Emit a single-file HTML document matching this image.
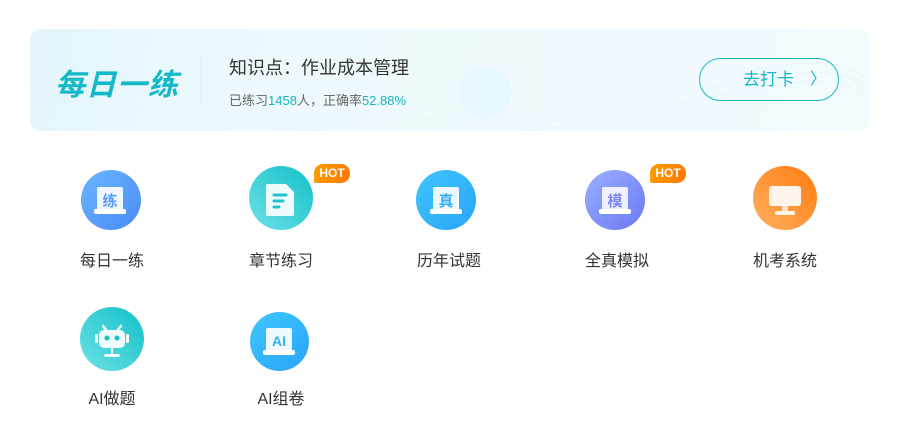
<!DOCTYPE html>
<html><head><meta charset="utf-8"><style>
*{margin:0;padding:0;box-sizing:border-box}
body{width:898px;height:436px;background:#fff;font-family:"Liberation Sans","Noto Sans CJK SC",sans-serif;position:relative;overflow:hidden}
.banner{position:absolute;left:30px;top:29px;width:839px;height:102px;border-radius:10px;background:linear-gradient(100deg,#e3f6fb 0%,#eef9fd 30%,#f2fbfe 100%);overflow:hidden}
.logo{position:absolute;left:55px;top:60px;font-size:30px;font-weight:bold;font-style:italic;color:#13b9c8;letter-spacing:1px}
.div{position:absolute;left:201px;top:55px;width:1px;height:50px;background:#d9eef3}
.t1{position:absolute;left:229px;top:54px;font-size:18px;color:#333}
.t2{position:absolute;left:229px;top:90px;font-size:13px;color:#666}
.t2 b{font-weight:normal;color:#19b5c4}
.btn{position:absolute;left:699px;top:58px;width:140px;height:43px;border:1px solid #19b8c8;border-radius:22px;color:#19b5c4;font-size:17px;line-height:41px;padding-left:43px}
.btn span{position:absolute;left:110px;top:0;font-size:16px}
.deco{position:absolute;left:459px;top:66px;width:52px;height:52px;border-radius:50%;background:#e6f7fd}
.it{position:absolute;width:140px;text-align:center;font-size:16px;color:#333}
.c{position:absolute;border-radius:50%}
.hot{position:absolute;width:36px;height:19px;border-radius:9px 9px 9px 2px;background:linear-gradient(90deg,#ff9a00,#ff7a00);color:#fff;font-size:12px;font-weight:bold;line-height:19px;text-align:center}
</style></head><body>
<div class="banner"><svg width="839" height="102" style="position:absolute;left:0;top:0"><g fill="none" stroke="#e9f6fb" stroke-width="1"><path d="M0 80 C200 60 400 120 600 70 S800 30 839 50"/><path d="M0 88 C200 70 400 126 600 78 S800 40 839 58"/><path d="M0 96 C200 80 400 132 600 86 S800 50 839 66"/></g></svg></div>
<div class="deco"></div>
<div class="logo">每日一练</div>
<div class="div"></div>
<div class="t1">知识点：作业成本管理</div>
<div class="t2">已练习<b>1458</b>人，正确率<b>52.88%</b></div>
<div class="btn">去打卡<span>〉</span></div>

<div class="c" style="left:81px;top:170px;width:60px;height:60px;background:linear-gradient(135deg,#6ab5ff,#4a8bf7)"></div>
<div class="c" style="left:249px;top:166px;width:64px;height:64px;background:linear-gradient(225deg,#13c1c8,#6de0e6)"></div>
<div class="c" style="left:416px;top:170px;width:60px;height:60px;background:linear-gradient(135deg,#3fc6ff,#2aa4f7)"></div>
<div class="c" style="left:585px;top:170px;width:60px;height:60px;background:linear-gradient(135deg,#9ab0ff,#6a78f5)"></div>
<div class="c" style="left:753px;top:166px;width:64px;height:64px;background:linear-gradient(225deg,#ff7b10,#ffb060)"></div>
<div class="c" style="left:80px;top:307px;width:64px;height:64px;background:linear-gradient(225deg,#13c1c8,#6de0e6)"></div>
<div class="c" style="left:250px;top:312px;width:59px;height:59px;background:linear-gradient(135deg,#3fc6ff,#2aa4f7)"></div>

<svg style="position:absolute;left:0;top:0" width="898" height="436">
<g fill="#eef6ff"><rect x="97" y="187" width="26" height="24" rx="2"/><rect x="94" y="209" width="32" height="5" rx="2" fill="#fff"/></g>
<text x="110" y="206" font-size="15" font-weight="bold" fill="#5a9af7" text-anchor="middle" font-family="Noto Sans CJK SC">练</text>
<path d="M268 184 h18 l8 8 v22 a2 2 0 0 1 -2 2 h-24 a2 2 0 0 1 -2 -2 v-28 a2 2 0 0 1 2 -2z" fill="#eefcfd"/>
<g stroke="#24c3cc" stroke-width="3" stroke-linecap="round"><path d="M274 195 h12M274 201 h9M274 207 h5"/></g>
<g fill="#eef8ff"><rect x="433" y="187" width="26" height="24" rx="2"/><rect x="430" y="209" width="32" height="5" rx="2" fill="#fff"/></g>
<text x="446" y="206" font-size="15" font-weight="bold" fill="#36aef7" text-anchor="middle" font-family="Noto Sans CJK SC">真</text>
<g fill="#f0f1ff"><rect x="602" y="187" width="26" height="24" rx="2"/><rect x="599" y="209" width="32" height="5" rx="2" fill="#fff"/></g>
<text x="615" y="206" font-size="15" font-weight="bold" fill="#7a86f5" text-anchor="middle" font-family="Noto Sans CJK SC">模</text>
<rect x="769" y="186" width="32" height="20" rx="3" fill="#fff4ea"/><rect x="782" y="206" width="6" height="5" fill="#ffe2c8"/><rect x="775" y="211" width="20" height="4" rx="2" fill="#fff4ea"/>
<g stroke="#eefcfd" stroke-width="2.5" stroke-linecap="round"><path d="M103 326 l4 5M121 326 l-4 5"/></g>
<rect x="99" y="330" width="26" height="18" rx="5" fill="#eefcfd"/><rect x="95" y="334" width="3" height="9" rx="1" fill="#eefcfd"/><rect x="126" y="334" width="3" height="9" rx="1" fill="#eefcfd"/>
<circle cx="107" cy="338" r="2.5" fill="#1cbdc6"/><circle cx="117" cy="338" r="2.5" fill="#1cbdc6"/>
<rect x="111" y="348" width="2" height="6" fill="#eefcfd"/><rect x="104" y="354" width="16" height="3" rx="1.5" fill="#eefcfd"/>
<g fill="#eef8ff"><rect x="266" y="328" width="26" height="24" rx="2"/><rect x="263" y="350" width="32" height="5" rx="2" fill="#fff"/></g>
<text x="279" y="346" font-size="14" font-weight="bold" fill="#36aef7" text-anchor="middle">AI</text>
</svg>

<div class="hot" style="left:314px;top:164px">HOT</div>
<div class="hot" style="left:650px;top:164px">HOT</div>

<div class="it" style="left:42px;top:247px">每日一练</div>
<div class="it" style="left:211px;top:247px">章节练习</div>
<div class="it" style="left:379px;top:247px">历年试题</div>
<div class="it" style="left:547px;top:247px">全真模拟</div>
<div class="it" style="left:715px;top:247px">机考系统</div>
<div class="it" style="left:42px;top:385px">AI做题</div>
<div class="it" style="left:211px;top:385px">AI组卷</div>
</body></html>
